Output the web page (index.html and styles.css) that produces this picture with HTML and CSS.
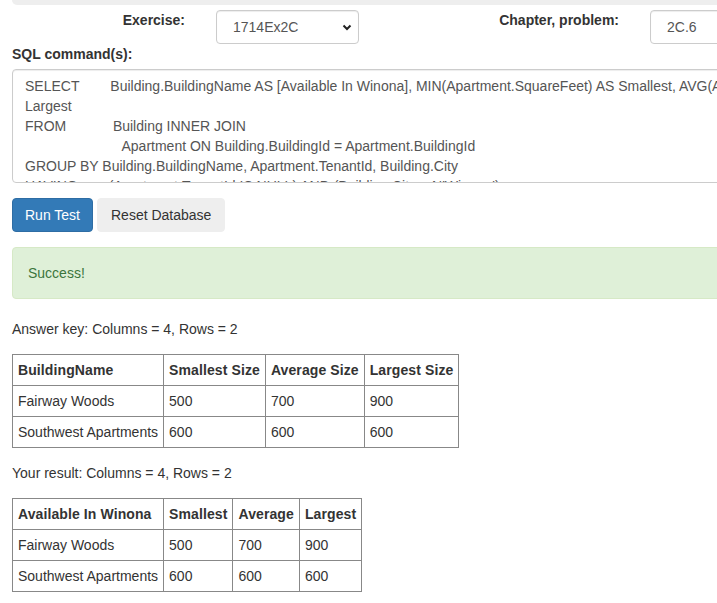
FILE: index.html
```html
<!DOCTYPE html>
<html>
<head>
<meta charset="utf-8">
<link rel="stylesheet" href="styles.css">
</head>
<body>
<div class="page">
  <div class="well-tail"></div>
  <div class="form-row">
    <label class="field-label">Exercise:</label>
    <div class="select-wrap">
      <select class="control select"><option>1714Ex2C</option></select>
      <svg class="chev" width="10" height="7" viewBox="0 0 10 7"><path d="M1.5 1.5 L5 5 L8.5 1.5" fill="none" stroke="#222" stroke-width="2"/></svg>
    </div>
    <label class="field-label">Chapter, problem:</label>
    <input class="control input" value="2C.6">
  </div>
  <label class="sql-label">SQL command(s):</label>
  <textarea class="control sql">SELECT        Building.BuildingName AS [Available In Winona], MIN(Apartment.SquareFeet) AS Smallest, AVG(Apartment.SquareFeet) AS Average, MAX(Apartment.SquareFeet) AS
Largest
FROM            Building INNER JOIN
                         Apartment ON Building.BuildingId = Apartment.BuildingId
GROUP BY Building.BuildingName, Apartment.TenantId, Building.City
HAVING        (Apartment.TenantId IS NULL) AND (Building.City = N'Winona')</textarea>
  <div class="buttons">
    <button class="btn btn-primary">Run Test</button>
    <button class="btn btn-default">Reset Database</button>
  </div>
  <div class="alert">Success!</div>
  <p class="caption">Answer key: Columns = 4, Rows = 2</p>
  <table class="result">
    <tr><th>BuildingName</th><th>Smallest Size</th><th>Average Size</th><th>Largest Size</th></tr>
    <tr><td>Fairway Woods</td><td>500</td><td>700</td><td>900</td></tr>
    <tr><td>Southwest Apartments</td><td>600</td><td>600</td><td>600</td></tr>
  </table>
  <p class="caption">Your result: Columns = 4, Rows = 2</p>
  <table class="result">
    <tr><th>Available In Winona</th><th>Smallest</th><th>Average</th><th>Largest</th></tr>
    <tr><td>Fairway Woods</td><td>500</td><td>700</td><td>900</td></tr>
    <tr><td>Southwest Apartments</td><td>600</td><td>600</td><td>600</td></tr>
  </table>
</div>
</body>
</html>
```
FILE: styles.css
```css
html, body {
  margin: 0;
  padding: 0;
  overflow: hidden;
  background: #fff;
}
body {
  font-family: "Liberation Sans", Arial, sans-serif;
  font-size: 14px;
  line-height: 20px;
  color: #333;
}
.page {
  width: 900px;
  padding-left: 12px;
}
.well-tail {
  height: 5px;
  background: #eeeeee;
  border-radius: 0 0 6px 6px;
}
.form-row {
  display: grid;
  grid-template-columns: 173px 143px 229px 143px;
  column-gap: 31px;
  margin-top: 5px;
  align-items: start;
}
.field-label {
  font-weight: bold;
  text-align: right;
}
.control {
  font-family: "Liberation Sans", Arial, sans-serif;
  font-size: 14px;
  line-height: 20px;
  color: #555;
  background: #fff;
  border: 1px solid #ccc;
  border-radius: 4px;
  box-sizing: border-box;
  box-shadow: inset 0 1px 1px rgba(0,0,0,.075);
  margin: 0;
}
.select-wrap {
  position: relative;
}
.select {
  width: 143px;
  height: 34px;
  padding: 6px 12px 6px 16px;
  -webkit-appearance: none;
  appearance: none;
}
.chev {
  position: absolute;
  left: 126px;
  top: 14px;
}
.input {
  width: 143px;
  height: 34px;
  padding: 6px 16px;
}
.sql-label {
  display: block;
  font-weight: bold;
  margin-bottom: 5px;
}
.sql {
  display: block;
  width: 860px;
  height: 114px;
  padding: 6px 12px;
  resize: none;
  overflow: hidden;
  white-space: pre;
}
.buttons {
  display: flex;
  gap: 4px;
  margin-top: 15px;
}
.btn {
  font-family: "Liberation Sans", Arial, sans-serif;
  font-size: 14px;
  line-height: 20px;
  height: 34px;
  padding: 6px 12px;
  border-radius: 4px;
  border: 1px solid transparent;
  box-sizing: border-box;
}
.btn-primary {
  background: #337ab7;
  border-color: #2e6da4;
  color: #fff;
}
.btn-default {
  background: #eeeeee;
  border-color: #eeeeee;
  color: #333;
  padding: 6px 13px;
}
.alert {
  margin-top: 15px;
  margin-bottom: 20px;
  padding: 15px;
  background: #dff0d8;
  border: 1px solid #d6e9c6;
  border-radius: 4px;
  color: #3c763d;
}
.caption {
  margin: 0 0 15px 0;
}
.result {
  border-collapse: collapse;
  margin-bottom: 15px;
}
.result th, .result td {
  border: 1px solid #888;
  padding: 5px;
  text-align: left;
  vertical-align: top;
}
.result th {
  font-weight: bold;
  letter-spacing: 0.1px;
}
```
